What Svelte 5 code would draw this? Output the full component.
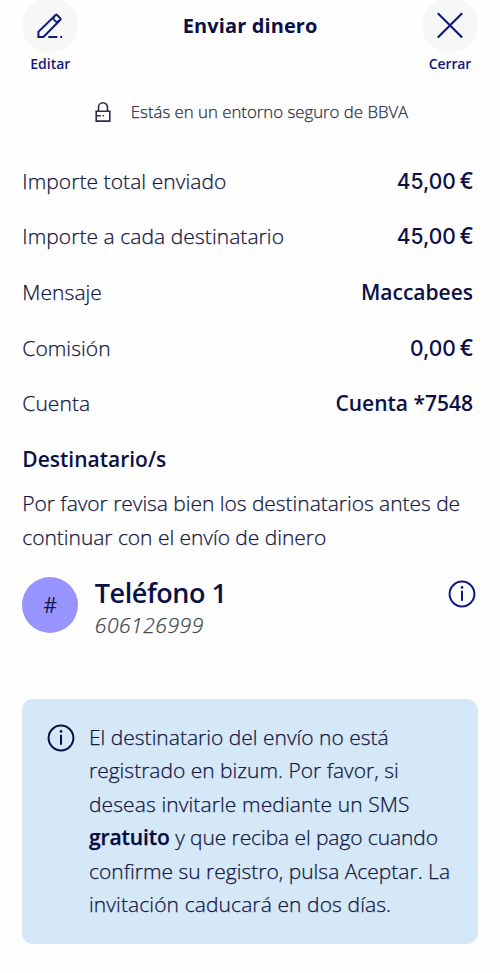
<script>
  const rows = [
    { label: 'Importe total enviado', value: '45,00', euro: true },
    { label: 'Importe a cada destinatario', value: '45,00', euro: true },
    { label: 'Mensaje', value: 'Maccabees' },
    { label: 'Comisión', value: '0,00', euro: true },
    { label: 'Cuenta', value: 'Cuenta *7548' }
  ];
</script>

{#snippet info()}
  <svg class="info" viewBox="0 0 28 28" width="28" height="28" fill="none" stroke="currentColor">
    <circle cx="14" cy="14" r="12.4" stroke-width="2" />
    <path d="M14 10.8v10" stroke-width="2" />
    <circle cx="14" cy="7.4" r="1.3" fill="currentColor" stroke="none" />
  </svg>
{/snippet}

<main>
  <header>
    <button class="action">
      <span class="disc">
        <svg viewBox="0 0 26 26" width="26" height="26" fill="none" stroke="currentColor" stroke-width="2">
          <path d="M1.4 25v-5.2L18.6 3a1 1 0 0 1 1.4 0l3.4 3.4a1 1 0 0 1 0 1.4L6.4 25z" />
          <path d="M15.4 6.2l5 5M17.6 4.2l-1.9 3.4M22.3 8.6l-3.6 2" stroke-width="1.7" />
          <path d="M11.3 25h9M23.2 25h1.9" />
        </svg>
      </span>
      <span>Editar</span>
    </button>
    <h1>Enviar dinero</h1>
    <button class="action">
      <span class="disc">
        <svg viewBox="0 0 26 26" width="26" height="26" fill="none" stroke="currentColor" stroke-width="2.1">
          <path d="M.8 1.2l24.4 24.4M25.2 1.2L.8 25.6" />
        </svg>
      </span>
      <span class="close">Cerrar</span>
    </button>
  </header>

  <div class="secure">
    <svg viewBox="0 0 16 20" width="16" height="20" fill="none" stroke="currentColor" stroke-width="1.6">
      <path d="M1.2 9.2h13.6v9.9H1.2z" />
      <path d="M3.5 9V5.3a4.5 4.5 0 0 1 9 0V9" />
      <path d="M1.5 13.7h4.3M7.6 13.7h1.5" />
    </svg>
    <span>Estás en un entorno seguro de BBVA</span>
  </div>

  <dl>
    {#each rows as row}
      <div class="row">
        <dt>{row.label}</dt>
        <dd class:amount={row.euro}>{row.value}{#if row.euro}<span class="euro">€</span>{/if}</dd>
      </div>
    {/each}
  </dl>

  <h2>Destinatario/s</h2>
  <p class="review">Por favor revisa bien los destinatarios antes de<br />continuar con el envío de dinero</p>

  <section class="contact">
    <span class="avatar">#</span>
    <div class="who">
      <strong>Teléfono 1</strong>
      <em>606126999</em>
    </div>
    {@render info()}
  </section>

  <aside>
    {@render info()}
    <p>
      El destinatario del envío no está<br />
      registrado en bizum. Por favor, si<br />
      <span class="wide">deseas invitarle mediante un SMS</span><br />
      <span class="tight"><b>gratuito</b> y que reciba el pago cuando</span><br />
      confirme su registro, pulsa Aceptar. La<br />
      <span class="wide">invitación caducará en dos días.</span>
    </p>
  </aside>
</main>

<style>
  :global(body) {
    background: #fefefe;
  }
  main {
    box-sizing: border-box;
    width: 500px;
    height: 973px;
    overflow: hidden;
    padding: 0 22px 0 22.3px;
    color: #121640;
    font: 300 21px/33.4px 'Open Sans', 'Noto Sans', sans-serif;
  }
  dt,
  p,
  em,
  .secure span {
    -webkit-text-stroke: 0.25px currentColor;
  }
  header {
    display: flex;
    justify-content: space-between;
    height: 80px;
  }
  h1,
  h2 {
    margin: 0;
    font-weight: 600;
    color: #0b1046;
  }
  h1 {
    padding-top: 10px;
    font-size: 20px;
    font-weight: 700;
    line-height: 32px;
    letter-spacing: 0.1px;
  }
  .action {
    display: flex;
    flex-direction: column;
    align-items: center;
    width: 56px;
    padding: 0;
    border: 0;
    background: none;
    color: #11197f;
    font: 600 14px/20px 'Open Sans', sans-serif;
  }
  .disc {
    display: flex;
    align-items: center;
    justify-content: center;
    width: 56px;
    height: 56px;
    margin: -3px 0 1px;
    border-radius: 50%;
    background: #f6f8f8;
  }
  .close {
    letter-spacing: -0.1px;
  }
  .secure {
    display: flex;
    align-items: center;
    gap: 19.5px;
    height: 24px;
    padding: 20px 0 0 73px;
    font-size: 16.8px;
    line-height: 24px;
    white-space: nowrap;
    color: #2b2e4a;
  }
  dl {
    margin: 29.8px 0 0;
  }
  .row {
    display: flex;
    justify-content: space-between;
    height: 55.6px;
    line-height: 55.6px;
    padding-right: 5px;
  }
  dt {
    letter-spacing: 0.06px;
  }
  dd {
    margin: 0;
    font-weight: 600;
    color: #0b1046;
  }
  .amount {
    font-family: 'Inter', sans-serif;
    font-size: 21px;
    font-weight: 550;
  }
  .euro {
    margin-left: 4px;
    font-family: 'Open Sans', sans-serif;
    font-size: 23px;
    font-weight: 600;
    line-height: 1;
  }
  h2 {
    font-size: 21px;
    line-height: 55.7px;
  }
  p {
    margin: 0;
    white-space: nowrap;
  }
  .review {
    letter-spacing: -0.04px;
  }
  .contact {
    display: flex;
    height: 56px;
    margin-top: 22.3px;
  }
  .avatar {
    width: 56px;
    height: 56px;
    border-radius: 50%;
    background: #9794ff;
    line-height: 56px;
    text-align: center;
    font-weight: 400;
  }
  .who {
    display: flex;
    flex: 1;
    flex-direction: column;
    padding-left: 16.5px;
  }
  strong {
    height: 34.5px;
    font-size: 27px;
    line-height: 31px;
    font-weight: 600;
    letter-spacing: -0.45px;
    color: #0b1046;
  }
  em {
    font-size: 21px;
    line-height: 34px;
    letter-spacing: 0.55px;
    color: #414750;
  }
  .info {
    flex: none;
  }
  .contact .info {
    margin: 3px 2.5px 0 0;
    color: #11197f;
  }
  aside {
    display: flex;
    gap: 14px;
    box-sizing: border-box;
    width: 456px;
    height: 245px;
    margin-top: 66.5px;
    padding: 22px 0 0 24.7px;
    border-radius: 11px;
    background: #d5e8f8;
  }
  aside .info {
    margin-top: 3px;
    color: #0b1046;
  }
  .wide {
    letter-spacing: 0.1px;
  }
  .tight {
    letter-spacing: -0.09px;
  }
  b {
    font-weight: 600;
    color: #050b43;
  }
</style>
